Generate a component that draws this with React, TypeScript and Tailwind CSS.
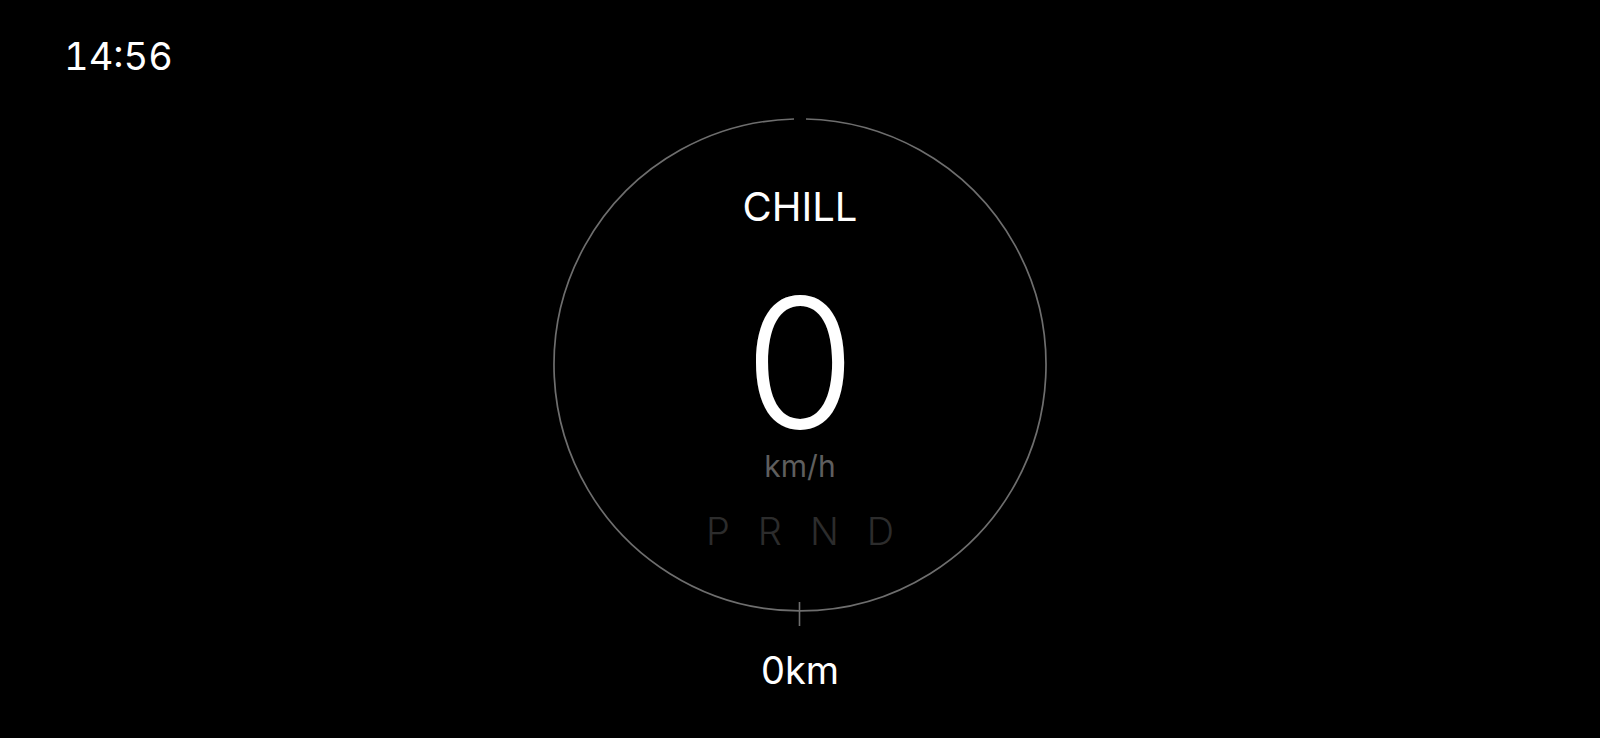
import React from "react";

function Ring() {
  return (
    <svg
      className="absolute inset-0 overflow-visible"
      width="494"
      height="494"
      viewBox="0 0 494 494"
      fill="none"
    >
      <path
        d="M 253 1 A 246 246 0 1 1 241 1"
        stroke="#6e6e6e"
        strokeWidth="1.7"
      />
      <line x1="246.5" y1="484" x2="246.5" y2="508" stroke="#6e6e6e" strokeWidth="1.6" />
    </svg>
  );
}

export default function App() {
  return (
    <div
      className="w-full h-[738px] bg-black text-white overflow-hidden flex flex-col"
      style={{ fontFamily: "Inter, 'Noto Sans', sans-serif" }}
    >
      <div className="pl-[64px] pt-[37px] h-[118px] shrink-0">
        <div className="text-[38px] leading-none font-normal tabular-nums">14:56</div>
      </div>
      <div className="flex flex-col items-center">
        <div className="relative w-[494px] h-[494px] flex flex-col items-center">
          <Ring />
          <div className="mt-[69px] text-[40px] leading-none font-normal">CHILL</div>
          <div className="mt-[66px] text-[180px] leading-[140px] font-light">0</div>
          <div className="mt-[18px] text-[30px] leading-[30px] text-[#5e5e5e]">km/h</div>
          <div className="mt-[31px] flex gap-[28px] text-[38px] leading-none font-light text-[#2c2c2c]">
            <span>P</span>
            <span>R</span>
            <span>N</span>
            <span>D</span>
          </div>
        </div>
        <div className="mt-[39px] text-[38px] leading-none">0km</div>
      </div>
    </div>
  );
}
